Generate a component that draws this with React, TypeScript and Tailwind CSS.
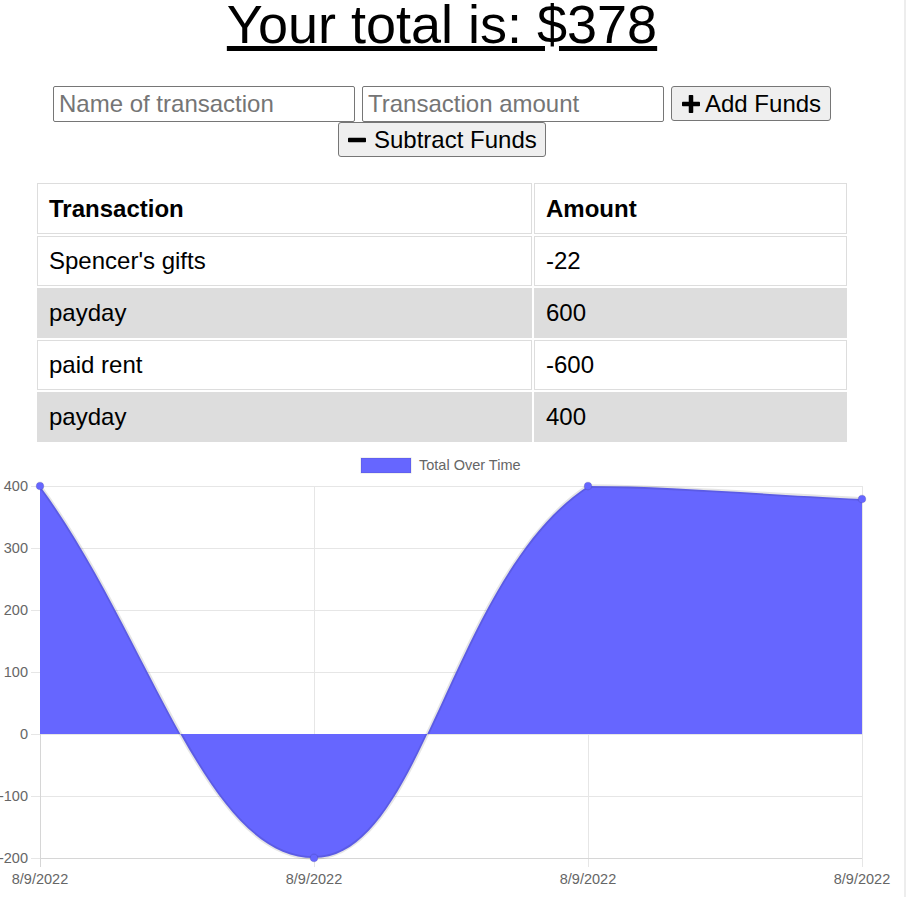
import { useState } from 'react'

interface Transaction {
  name: string
  value: number
}

const transactions: Transaction[] = [
  { name: "Spencer's gifts", value: -22 },
  { name: 'payday', value: 600 },
  { name: 'paid rent', value: -600 },
  { name: 'payday', value: 400 },
]

// chart area in page coordinates
const yTicks = [400, 300, 200, 100, 0, -100, -200]
const xTicks = [40, 314, 588, 862]
const top = 486
const step = 62

function PlusIcon() {
  return (
    <svg width="18" height="18" viewBox="0 0 18 18" className="shrink-0">
      <rect x="6.75" y="0" width="4.5" height="18" rx="0.8" fill="black" />
      <rect x="0" y="6.75" width="18" height="4.5" rx="0.8" fill="black" />
    </svg>
  )
}

function MinusIcon() {
  return (
    <svg width="18" height="18" viewBox="0 0 18 18" className="shrink-0">
      <rect x="0" y="6.75" width="18" height="4.5" rx="0.8" fill="black" />
    </svg>
  )
}

function Chart() {
  const curve =
    'M40,486 C149.6,634.8 204.4,858 314,858 C423.6,858 450.5,576.1 588,486 C669.7,486 752.4,493.8 862,499'
  const points = [
    [40, 486],
    [314, 858],
    [588, 486],
    [862, 499],
  ]

  return (
    <svg width="904" height="453" viewBox="0 444 904 453" className="block" style={{ fontFamily: '"Liberation Sans", Arial, sans-serif' }}>
      {/* legend */}
      <rect x="361" y="458" width="50" height="15" fill="#6666ff" stroke="rgba(0,0,0,0.1)" strokeWidth="1.2" />
      <text x="419" y="470" fontSize="14.5" fill="#666">Total Over Time</text>

      {/* grid */}
      {yTicks.map((t, i) => (
        <g key={t}>
          <line x1="31" x2="862" y1={top + i * step + 0.5} y2={top + i * step + 0.5} stroke="#e6e6e6" shapeRendering="crispEdges" />
          <text x="28" y={top + i * step + 5} fontSize="14.5" fill="#666" textAnchor="end">{t}</text>
        </g>
      ))}
      {xTicks.map((x) => (
        <g key={x}>
          <line x1={x + 0.5} x2={x + 0.5} y1="486" y2="867" stroke={x === 40 ? '#d6d6d6' : '#e6e6e6'} shapeRendering="crispEdges" />
          <text x={x} y="884" fontSize="14.5" fill="#666" textAnchor="middle">8/9/2022</text>
        </g>
      ))}
      <line x1="40" x2="862" y1="858.5" y2="858.5" stroke="#d6d6d6" shapeRendering="crispEdges" />

      {/* data */}
      <path d={`${curve} L862,734 L40,734 Z`} fill="#6666ff" />
      <path d={curve} fill="none" stroke="rgba(0,0,0,0.1)" strokeWidth="3.6" />
      {points.map(([x, y]) => (
        <circle key={x} cx={x} cy={y} r="3.8" fill="#6666ff" stroke="rgba(0,0,0,0.1)" strokeWidth="1.2" />
      ))}
    </svg>
  )
}

export default function App() {
  const [name, setName] = useState('')
  const [amount, setAmount] = useState('')

  return (
    <div className="flex min-h-screen bg-white text-black" style={{ fontFamily: '"Liberation Sans", Arial, sans-serif' }}>
      <div className="w-[904px]">
        <div className="w-[884px] flex flex-col items-center">
          <h1 className="text-[54px] leading-[48px] underline font-normal">Your total is: $378</h1>

          <form className="mt-[38px] flex flex-wrap justify-center items-start gap-x-[7px] gap-y-0 w-[884px]" onSubmit={(e) => e.preventDefault()}>
            <input
              type="text"
              value={name}
              onChange={(e) => setName(e.target.value)}
              placeholder="Name of transaction"
              className="w-[302px] h-[36px] px-[5px] text-[24px] border border-[#767676] rounded-[2px] placeholder:text-[#757575] outline-none"
            />
            <input
              type="number"
              value={amount}
              onChange={(e) => setAmount(e.target.value)}
              placeholder="Transaction amount"
              className="w-[302px] h-[36px] px-[5px] text-[24px] border border-[#767676] rounded-[2px] placeholder:text-[#757575] outline-none"
            />
            <button type="button" className="w-[160px] h-[35px] pl-[10px] flex items-center gap-[5px] text-[24px] bg-[#efefef] border border-[#767676] rounded-[3px]">
              <PlusIcon />
              Add Funds
            </button>
            <button type="button" className="w-[208px] h-[35px] pl-[9px] flex items-center gap-[8px] text-[24px] bg-[#efefef] border border-[#767676] rounded-[3px]">
              <MinusIcon />
              Subtract Funds
            </button>
          </form>

          <table className="mt-[24px] w-[814px] border-separate border-spacing-[2px] text-[24px]">
            <thead>
              <tr>
                <th className="w-[495px] h-[51px] px-[11px] text-left font-bold border border-[#dddddd]">Transaction</th>
                <th className="h-[51px] px-[11px] text-left font-bold border border-[#dddddd]">Amount</th>
              </tr>
            </thead>
            <tbody>
              {transactions.map((t, i) => (
                <tr key={i} className={i % 2 === 1 ? 'bg-[#dddddd]' : ''}>
                  <td className="h-[50px] px-[11px] border border-[#dddddd]">{t.name}</td>
                  <td className="h-[50px] px-[11px] border border-[#dddddd]">{t.value}</td>
                </tr>
              ))}
            </tbody>
          </table>
        </div>

        <Chart />
      </div>
      <div className="w-[2px] bg-[#ededed]" />
    </div>
  )
}
